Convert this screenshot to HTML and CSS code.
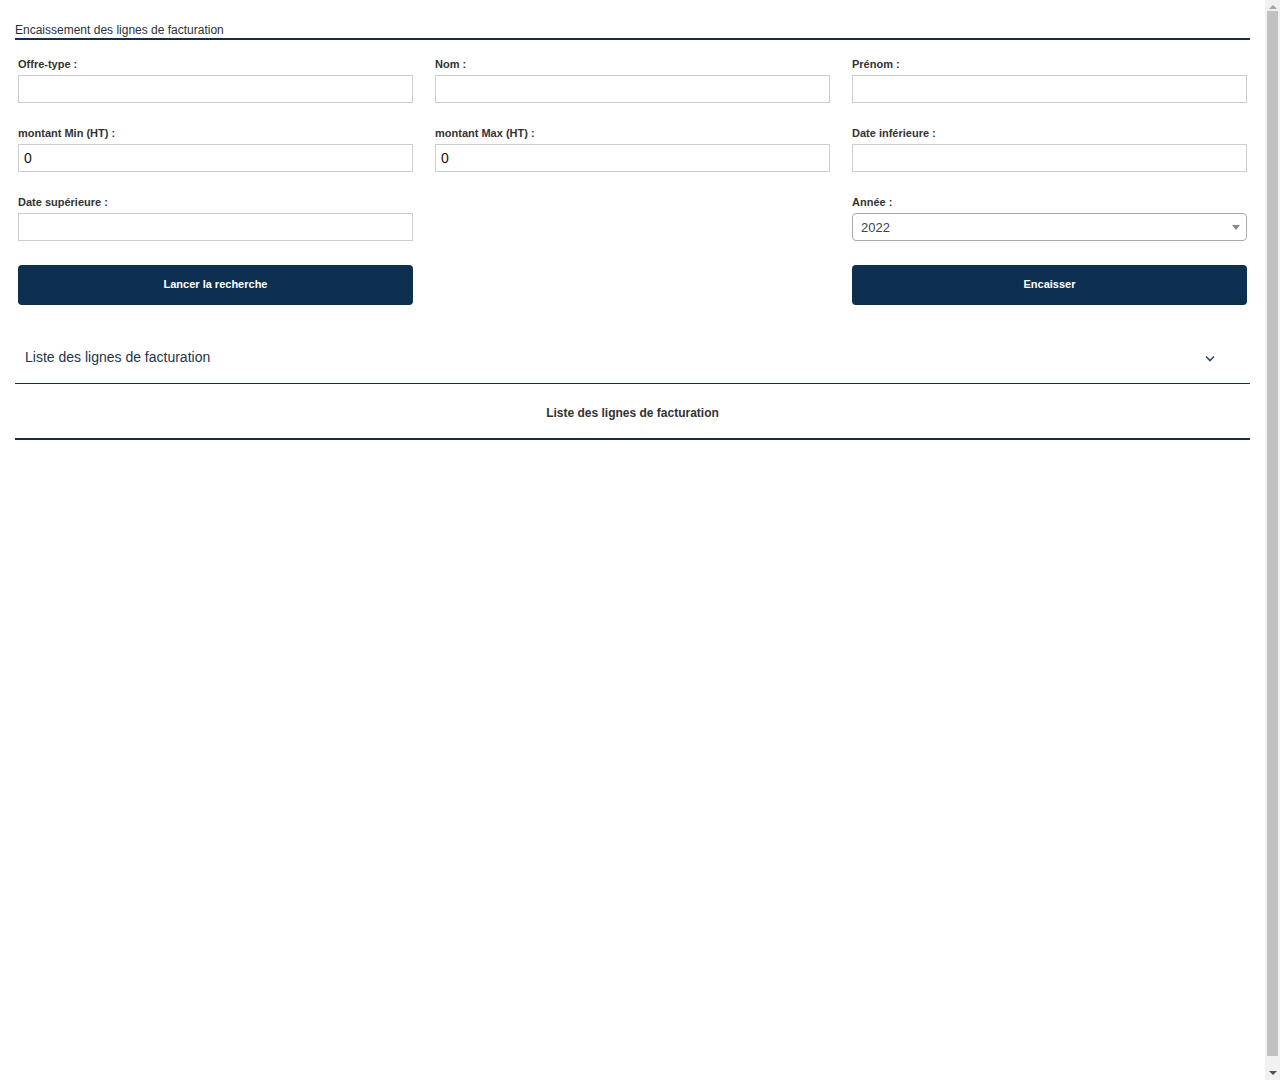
FILE: index.html
```html
<!DOCTYPE html>
<html lang="fr">
<head>
    <meta charset="UTF-8">
    <meta name="viewport" content="width=device-width, initial-scale=1.0">
    <title>Encaissement des lignes de facturation</title>
    <link rel="stylesheet" href="styles.css">
</head>
<body>
    <div class="page">
        <h1 class="page-title">Encaissement des lignes de facturation</h1>

        <form class="search-form">
            <div class="form-group">
                <label for="offre">Offre-type :</label>
                <input type="text" id="offre">
            </div>
            <div class="form-group">
                <label for="nom">Nom :</label>
                <input type="text" id="nom">
            </div>
            <div class="form-group">
                <label for="prenom">Prénom :</label>
                <input type="text" id="prenom">
            </div>

            <div class="form-group">
                <label for="montantMin">montant Min (HT) :</label>
                <input type="text" id="montantMin" value="0">
            </div>
            <div class="form-group">
                <label for="montantMax">montant Max (HT) :</label>
                <input type="text" id="montantMax" value="0">
            </div>
            <div class="form-group">
                <label for="dateInf">Date inférieure :</label>
                <input type="text" id="dateInf">
            </div>

            <div class="form-group">
                <label for="dateSup">Date supérieure :</label>
                <input type="text" id="dateSup">
            </div>
            <div class="form-group col-3">
                <label for="annee">Année :</label>
                <div class="select-wrap">
                    <select id="annee">
                        <option>2022</option>
                        <option>2021</option>
                        <option>2020</option>
                    </select>
                    <span class="select-arrow"></span>
                </div>
            </div>

            <button type="button" class="btn btn-search">Lancer la recherche</button>
            <button type="button" class="btn col-3">Encaisser</button>
        </form>

        <div class="accordion">
            <div class="accordion-header">
                <span>Liste des lignes de facturation</span>
                <svg class="chevron" width="10" height="7" viewBox="0 0 10 7">
                    <path d="M1 1.5 L5 5.5 L9 1.5" fill="none" stroke="#2c4a78" stroke-width="1.6"/>
                </svg>
            </div>
            <div class="accordion-body">
                Liste des lignes de facturation
            </div>
        </div>
    </div>

    <!-- fake window scrollbar (screenshot has one) -->
    <div class="scrollbar">
        <span class="scroll-arrow up"></span>
        <div class="scroll-thumb"></div>
        <span class="scroll-arrow down"></span>
    </div>
</body>
</html>
```

FILE: styles.css
```css
* {
    margin: 0;
    padding: 0;
    box-sizing: border-box;
}

body {
    font-family: 'Liberation Sans', Arial, sans-serif;
    color: #333;
    background-color: white;
}

.page {
    padding: 0 15px;
    margin-right: 15px;
    min-height: 1080px;
}

.page-title {
    font-size: 12px;
    font-weight: normal;
    line-height: 16px;
    padding-top: 22px;
    color: #2b2f3a;
    border-bottom: 2px solid #0e3050;
}

.search-form {
    display: grid;
    grid-template-columns: repeat(3, 1fr);
    column-gap: 22px;
    row-gap: 23px;
    padding: 17px 3px 0;
}

.form-group label {
    display: block;
    font-size: 11px;
    font-weight: bold;
    line-height: 14px;
    margin-bottom: 4px;
    color: #333;
}

.col-3 {
    grid-column: 3;
}

input[type="text"] {
    display: block;
    width: 100%;
    height: 28px;
    padding: 0 5px;
    font-family: 'Liberation Sans', Arial, sans-serif;
    font-size: 14px;
    color: #111;
    border: 1px solid #ccc;
    border-radius: 0;
    outline: none;
}

.select-wrap {
    position: relative;
}

select {
    display: block;
    width: 100%;
    height: 28px;
    padding: 0 8px;
    font-family: 'Liberation Sans', Arial, sans-serif;
    font-size: 13px;
    color: #444;
    background-color: white;
    border: 1px solid #aaa;
    border-radius: 4px;
    appearance: none;
    -webkit-appearance: none;
    outline: none;
}

.select-arrow {
    position: absolute;
    right: 7px;
    top: 12px;
    border-left: 4px solid transparent;
    border-right: 4px solid transparent;
    border-top: 5px solid #888;
    pointer-events: none;
}

.btn {
    height: 40px;
    margin-top: 1px;
    padding-bottom: 2px;
    background-color: #0e3050;
    color: white;
    border: none;
    border-radius: 4px;
    font-family: 'Liberation Sans', Arial, sans-serif;
    font-size: 11px;
    font-weight: bold;
    cursor: pointer;
}

.btn-search {
    grid-column: 1;
}

.accordion {
    margin-top: 30px;
}

.accordion-header {
    display: flex;
    justify-content: space-between;
    align-items: center;
    padding: 12px 35px 16px 10px;
    font-size: 14px;
    line-height: 20px;
    color: #22344d;
    border-bottom: 1px solid #0e3050;
}

.chevron {
    margin-top: 3px;
}

.accordion-body {
    text-align: center;
    font-size: 12px;
    font-weight: bold;
    line-height: 16px;
    padding: 21px 0 17px;
    color: #333;
    border-bottom: 2px solid #0e3050;
}

.scrollbar {
    position: fixed;
    top: 0;
    right: 0;
    width: 15px;
    height: 100vh;
    background-color: #f1f1f1;
    display: flex;
    flex-direction: column;
    align-items: center;
}

.scroll-thumb {
    flex: 1;
    width: 11px;
    margin: 2px 0 15px;
    background-color: #c1c1c1;
}

.scroll-arrow {
    display: block;
    width: 0;
    height: 0;
    border-left: 4px solid transparent;
    border-right: 4px solid transparent;
}

.scroll-arrow.up {
    margin-top: 5px;
    border-bottom: 4px solid #a3a3a3;
}

.scroll-arrow.down {
    margin-bottom: 5px;
    border-top: 4px solid #505050;
}
```
